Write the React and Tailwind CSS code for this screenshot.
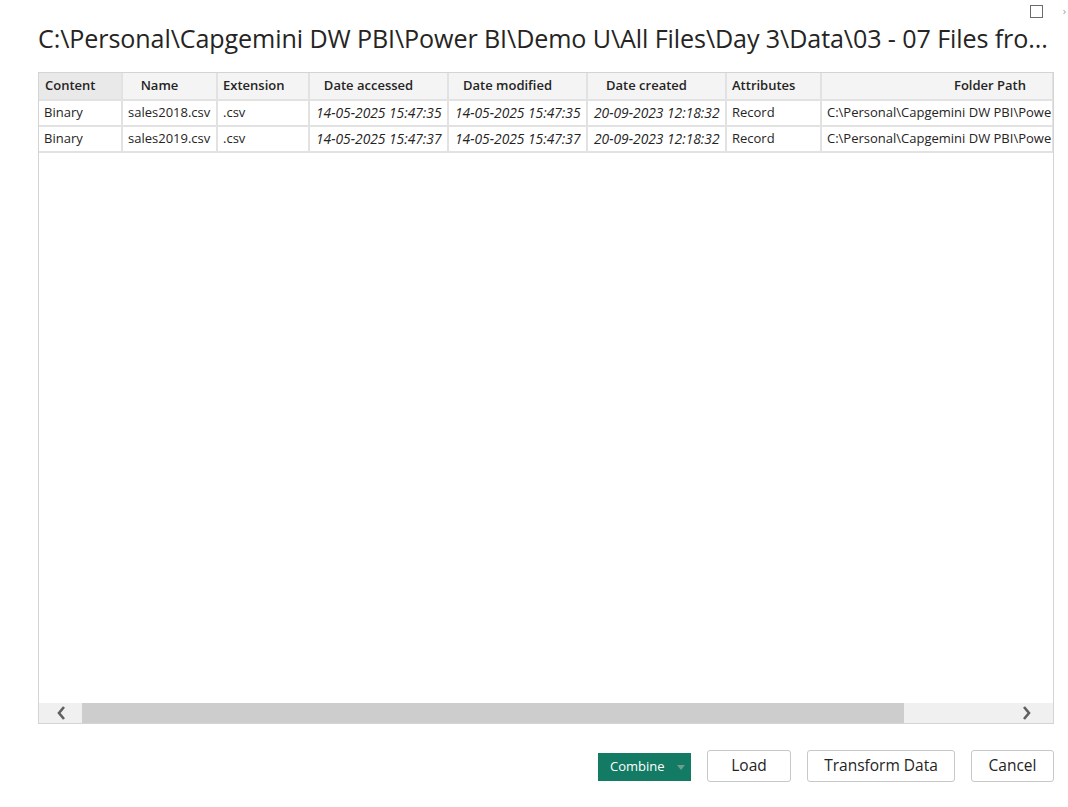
import React from 'react';

const columns = [
    { label: 'Content', width: 'w-[83px]', align: 'text-left pl-[6px]', active: true },
    { label: 'Name', width: 'w-[95px]', align: 'text-center pr-[20px]' },
    { label: 'Extension', width: 'w-[92px]', align: 'text-left pl-[5px]' },
    { label: 'Date accessed', width: 'w-[139px]', align: 'text-center pr-[20px]' },
    { label: 'Date modified', width: 'w-[139px]', align: 'text-center pr-[20px]' },
    { label: 'Date created', width: 'w-[139px]', align: 'text-center pr-[20px]' },
    { label: 'Attributes', width: 'w-[95px]', align: 'text-left pl-[5px]' },
    { label: 'Folder Path', width: 'w-[232px]', align: 'text-left pl-[132px]' },
];

const rows = [
    ['Binary', 'sales2018.csv', '.csv', '14-05-2025 15:47:35', '14-05-2025 15:47:35', '20-09-2023 12:18:32', 'Record', 'C:\\Personal\\Capgemini DW PBI\\Powe'],
    ['Binary', 'sales2019.csv', '.csv', '14-05-2025 15:47:37', '14-05-2025 15:47:37', '20-09-2023 12:18:32', 'Record', 'C:\\Personal\\Capgemini DW PBI\\Powe'],
];

const italicCols = [3, 4, 5];

const App = () => {
    return (
        <div className="w-[1068px] h-[807px] bg-white overflow-hidden flex flex-col text-[#252423]" style={{ fontFamily: '"Open Sans", "Noto Sans", sans-serif' }}>
            {/* Window controls */}
            <div className="h-[24px] flex justify-end items-start pt-[5px] pr-[2px]">
                <div className="w-[13px] h-[13px] border border-[#6b6b6b] mr-[20px]"></div>
                <span className="text-[11px] leading-[12px] text-[#a0a0a0]">›</span>
            </div>

            {/* Title */}
            <h1 className="pl-[38px] h-[48px] text-[25.1px] leading-[28px] text-[#252423] whitespace-nowrap tracking-[-0.1px]">
                C:\Personal\Capgemini DW PBI\Power BI\Demo U\All Files\Day 3\Data\03 - 07 Files fro...
            </h1>

            {/* Preview grid */}
            <div className="ml-[38px] w-[1016px] h-[652px] border border-[#d4d4d4] flex flex-col">
                <div className="flex-1 overflow-hidden">
                    <table className="table-fixed w-[1014px] border-collapse text-[13px]">
                        <thead>
                            <tr className="h-[27px]">
                                {columns.map((col, i) => (
                                    <th
                                        key={i}
                                        className={`${col.width} ${col.align} font-semibold whitespace-nowrap border-r-2 border-b-2 border-[#e2e2e2] ${col.active ? 'bg-[#e9e9e9]' : 'bg-[#f4f4f4]'} ${i === columns.length - 1 ? 'border-r-0' : ''}`}
                                    >
                                        {col.label}
                                    </th>
                                ))}
                            </tr>
                        </thead>
                        <tbody>
                            {rows.map((row, r) => (
                                <tr key={r} className="h-[26px]">
                                    {row.map((cell, c) => (
                                        <td
                                            key={c}
                                            className={`px-[5px] border-r-2 border-b-2 border-[#e2e2e2] whitespace-nowrap ${italicCols.includes(c) ? 'italic text-[13.8px] px-[6px]' : ''} ${c === row.length - 1 ? 'border-r-0' : ''}`}
                                        >
                                            {cell}
                                        </td>
                                    ))}
                                </tr>
                            ))}
                        </tbody>
                    </table>
                </div>

                {/* Horizontal scrollbar */}
                <div className="h-[20px] bg-[#f0f0f0] flex items-center">
                    <div className="w-[43px] flex justify-center">
                        <svg width="10" height="14" viewBox="0 0 10 14">
                            <path d="M8 1 L3 7 L8 13" fill="none" stroke="#606060" strokeWidth="2.6" />
                        </svg>
                    </div>
                    <div className="w-[822px] h-[20px] bg-[#cdcdcd]"></div>
                    <div className="flex-1 flex justify-end pr-[21px]">
                        <svg width="10" height="14" viewBox="0 0 10 14">
                            <path d="M2 1 L7 7 L2 13" fill="none" stroke="#606060" strokeWidth="2.6" />
                        </svg>
                    </div>
                </div>
            </div>

            {/* Footer buttons */}
            <div className="flex justify-end items-center gap-[16px] pr-[14px] mt-[26px] text-[15.5px] font-medium">
                <button className="h-[28px] w-[93px] bg-[#137a64] text-white text-[13px] font-normal flex items-center pl-[12px] gap-[12px] mt-[2px]">
                    Combine
                    <svg width="8" height="5" viewBox="0 0 8 5"><path d="M0 0 L8 0 L4 5 Z" fill="#6c9e90" /></svg>
                </button>
                <button className="h-[32px] w-[84px] border border-[#c8c8c8] rounded-[3px] bg-white">Load</button>
                <button className="h-[32px] w-[148px] border border-[#c8c8c8] rounded-[3px] bg-white">Transform Data</button>
                <button className="h-[32px] w-[83px] border border-[#c8c8c8] rounded-[3px] bg-white">Cancel</button>
            </div>
        </div>
    );
};

export default App;
